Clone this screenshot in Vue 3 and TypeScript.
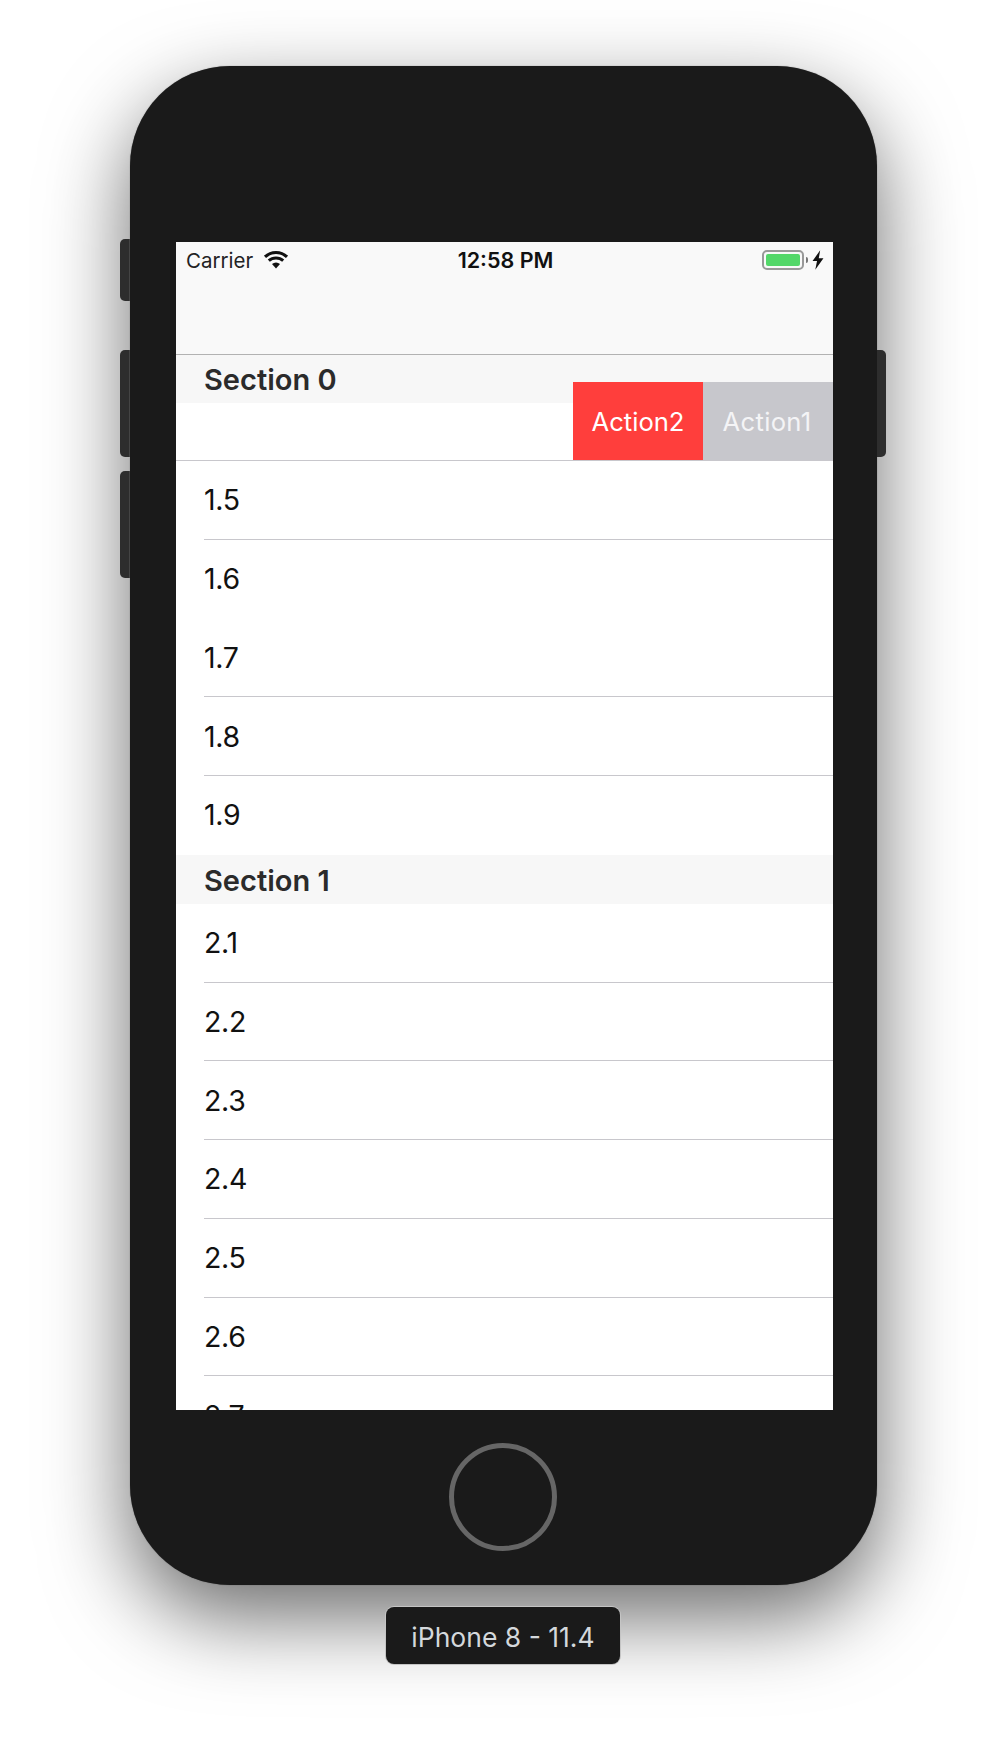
<script setup lang="ts">
interface Row { label: string; sep: boolean }
const section0: Row[] = [
  { label: '1.5', sep: true },
  { label: '1.6', sep: false },
  { label: '1.7', sep: true },
  { label: '1.8', sep: true },
  { label: '1.9', sep: false },
]
const section1: Row[] = ['2.1', '2.2', '2.3', '2.4', '2.5', '2.6', '2.7'].map((label) => ({ label, sep: true }))
</script>

<template>
  <div class="page">
    <div class="phone">
      <span class="side left b1"></span>
      <span class="side left b2"></span>
      <span class="side left b3"></span>
      <span class="side right b2"></span>
      <div class="screen">
        <div class="nav">
          <div class="status">
            <div class="status-left">
              <span class="carrier">Carrier</span>
              <svg class="wifi" width="26" height="19" viewBox="0 0 26 19">
                <path d="M13 18.5 L9 14 A6 6 0 0 1 17 14 Z" fill="#111" />
                <path d="M5.8 10.7 A10.6 10.6 0 0 1 20.2 10.7" fill="none" stroke="#111" stroke-width="3" />
                <path d="M2 6.8 A16 16 0 0 1 24 6.8" fill="none" stroke="#111" stroke-width="3" />
              </svg>
            </div>
            <div class="time">12:58 PM</div>
            <div class="status-right">
              <span class="battery"><span class="level"></span></span>
              <span class="nub"></span>
              <svg class="bolt" width="12" height="20" viewBox="0 0 11 18">
                <path d="M7.5 0 L0.5 10 H4.6 L3 18 L10.5 7.5 H6.2 Z" fill="#111" />
              </svg>
            </div>
          </div>
        </div>
        <div class="list">
          <div class="section-head first">Section 0</div>
          <div class="swiped"></div>
          <div class="actions">
            <div class="action red">Action2</div>
            <div class="action grey">Action1</div>
          </div>
          <div v-for="r in section0" :key="r.label" class="row">
            <span class="row-text">{{ r.label }}</span>
            <span v-if="r.sep" class="sep"></span>
          </div>
          <div class="section-head second">Section 1</div>
          <div v-for="r in section1" :key="r.label" class="row">
            <span class="row-text">{{ r.label }}</span>
            <span v-if="r.sep" class="sep"></span>
          </div>
        </div>
      </div>
      <div class="chin">
        <div class="home"></div>
      </div>
    </div>
    <div class="label">iPhone 8 - 11.4</div>
  </div>
</template>

<style>
html, body { margin: 0; background: #fff; }
</style>

<style scoped>
.page {
  width: 1008px;
  height: 1748px;
  overflow: hidden;
  background: #fff;
  display: flex;
  flex-direction: column;
  align-items: flex-start;
  font-family: Inter, "Liberation Sans", sans-serif;
  box-sizing: border-box;
  padding: 66px 0 0 130px;
}
.phone {
  position: relative;
  width: 747px;
  height: 1519px;
  background: #1a1a1a;
  border-radius: 100px;
  box-shadow: 0 32px 84px rgba(0, 0, 0, 0.58), 0 0 1px 0 rgba(0, 0, 0, 0.5);
  padding: 176px 44px 0 46px;
  box-sizing: border-box;
  display: flex;
  flex-direction: column;
}
.side {
  position: absolute;
  width: 10px;
  background: #2d2d2d;
}
.side.left {
  left: -10px;
  border-radius: 5px 0 0 5px;
  box-shadow: inset -1px 0 0 #444;
}
.side.right {
  right: -9px;
  width: 9px;
  border-radius: 0 5px 5px 0;
}
.b1 { top: 173px; height: 62px; }
.b2 { top: 284px; height: 107px; }
.b3 { top: 405px; height: 107px; }

.screen {
  position: relative;
  width: 657px;
  height: 1168px;
  flex: none;
  background: #fff;
  overflow: hidden;
}
.nav {
  height: 113px;
  box-sizing: border-box;
  background: #f9f9f9;
  border-bottom: 1px solid #b2b2b2;
}
.status {
  display: grid;
  grid-template-columns: 1fr auto 1fr;
  align-items: center;
  height: 36px;
  padding: 0 11px;
  color: #111;
  font-size: 20.5px;
  line-height: 36px;
}
.status-left {
  display: flex;
  align-items: center;
  gap: 10px;
  color: #222;
  margin-left: -1px;
}
.carrier { position: relative; top: 1px; }
.wifi { flex: none; margin-top: -2px; }
.time {
  font-weight: 600;
  font-size: 21.5px;
  color: #111;
  position: relative;
  left: 1px;
}
.status-right {
  display: flex;
  align-items: center;
  justify-content: flex-end;
  margin-right: -2px;
}
.battery {
  box-sizing: border-box;
  width: 42px;
  height: 20px;
  border: 2px solid #999;
  border-radius: 5px;
  padding: 2px;
  display: flex;
}
.level {
  flex: 1;
  background: #53d769;
  border-radius: 2px;
}
.nub {
  width: 2px;
  height: 6px;
  margin-left: 2px;
  background: #777;
  border-radius: 0 3px 3px 0;
}
.bolt { margin-left: 4px; }

.list { position: relative; }
.section-head {
  height: 49px;
  padding-left: 28px;
  background: #f7f7f7;
  color: #2b2b2b;
  font-size: 29px;
  font-weight: 600;
  line-height: 50px;
  box-sizing: border-box;
}
.section-head.first { height: 48px; }
.section-head.second { line-height: 52px; }
.swiped {
  height: 58px;
  border-bottom: 1px solid #c8c7cc;
  box-sizing: border-box;
}
.actions {
  position: absolute;
  top: 27px;
  right: 0;
  height: 78px;
  display: flex;
}
.action {
  display: flex;
  align-items: center;
  justify-content: center;
  color: #fff;
  font-size: 25.6px;
}
.red { width: 130px; background: #ff3e3c; }
.grey { width: 130px; background: #c7c7cc; color: #f4f4f6; letter-spacing: 0.3px; padding-right: 2px; box-sizing: border-box; }
.row {
  position: relative;
  height: 78.75px;
  display: flex;
  align-items: center;
  padding-left: 28px;
  box-sizing: border-box;
  background: #fff;
}
.row-text {
  font-size: 28.5px;
  color: #111;
  letter-spacing: -0.3px;
  position: relative;
  top: -0.5px;
}
.sep {
  position: absolute;
  left: 28px;
  right: 0;
  bottom: 0;
  height: 1px;
  background: #c8c7cc;
}
.chin {
  flex: 1;
  display: flex;
  justify-content: center;
  padding: 33px 3px 0 0;
  box-sizing: border-box;
}
.home {
  width: 108px;
  height: 108px;
  box-sizing: border-box;
  border: 5px solid #666;
  border-radius: 50%;
}
.label {
  margin: 22px 0 0 256px;
  width: 234px;
  height: 57px;
  box-sizing: border-box;
  background: #1a1a1a;
  border-radius: 8px;
  box-shadow: 0 0 0 1px #c4c4c4;
  color: #d4d8dc;
  font-size: 26.5px;
  padding-top: 2px;
  display: flex;
  align-items: center;
  justify-content: center;
  position: relative;
}
</style>
